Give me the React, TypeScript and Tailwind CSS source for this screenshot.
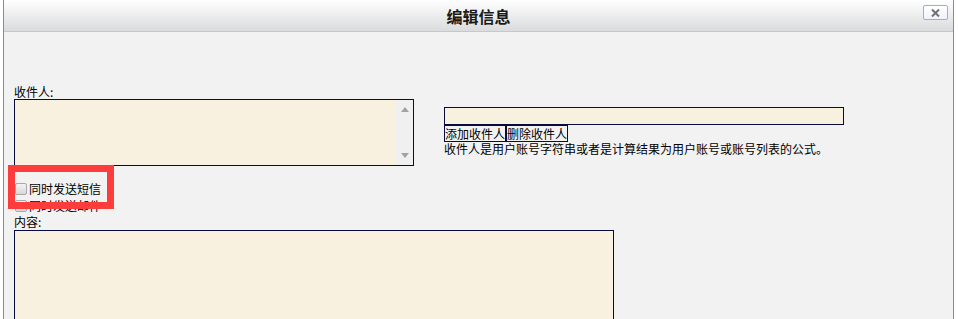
import React from "react";

const font = { fontFamily: '"Noto Sans CJK SC", "Noto Sans", sans-serif' };

function Checkbox({ label }: { label: string }) {
  return (
    <div className="flex items-center h-[17px]">
      <span className="ml-[1px] w-[12px] h-[12px] rounded-[2px] border border-[#a9a9a9] bg-gradient-to-b from-[#f4f4f4] to-[#d8d8d8]" />
      <span className="ml-[2px] text-[12px] leading-[17px] text-black">{label}</span>
    </div>
  );
}

export default function App() {
  return (
    <div className="w-[958px] h-[319px] bg-white relative overflow-hidden" style={font}>
      <div className="ml-[3px] w-[951px] h-[319px] border-l border-r border-[#8c8c8c] bg-[#f2f2f2] relative">
        {/* header */}
        <div className="h-[32px] border-b border-[#c8c8c8] bg-gradient-to-b from-[#ffffff] to-[#dadbdc] flex items-center justify-center relative">
          <span className="text-[16px] font-bold text-[#1a1a1a] leading-[20px]">编辑信息</span>
          <div className="absolute left-[919px] top-[5px] w-[25px] h-[15px] border border-[#8eb0ef] rounded-[2px] bg-gradient-to-b from-[#ffffff] to-[#eef2fb] flex items-center justify-center">
            <svg width="9" height="8" viewBox="0 0 9 8">
              <path d="M1 0.5 L8 7.5 M8 0.5 L1 7.5" stroke="#707070" strokeWidth="2" />
            </svg>
          </div>
        </div>

        {/* body */}
        <div className="pl-[10px] pt-[53px]">
          <div className="flex">
            <div className="w-[400px]">
              <div className="text-[12px] leading-[14px] text-black">收件人:</div>
              <div className="h-[67px] border border-[#0a0a3c] bg-[#f8f1e0] flex">
                <div className="flex-1" />
                <div className="w-[17px] bg-[#f0f0f0] flex flex-col items-center justify-between py-[7px]">
                  <svg width="8" height="5" viewBox="0 0 8 5"><path d="M0 5 L4 0 L8 5 Z" fill="#a3a3a3" /></svg>
                  <svg width="8" height="5" viewBox="0 0 8 5"><path d="M0 0 L4 5 L8 0 Z" fill="#a3a3a3" /></svg>
                </div>
              </div>
            </div>
            <div className="ml-[30px] pt-[22px] w-[400px]">
              <div className="h-[18px] border border-[#0a0a3c] bg-[#f8f1e0]" />
              <div className="flex">
                <div className="h-[17px] border border-[#0a0a3c] bg-[#f2f2f2] text-[12px] leading-[15px] text-black overflow-hidden">添加收件人</div>
                <div className="h-[17px] border border-[#0a0a3c] bg-[#f2f2f2] text-[12px] leading-[15px] text-black overflow-hidden">删除收件人</div>
              </div>
              <div className="text-[12px] leading-[14px] text-black whitespace-nowrap">收件人是用户账号字符串或者是计算结果为用户账号或账号列表的公式。</div>
            </div>
          </div>
          <div className="mt-[14px]">
            <Checkbox label="同时发送短信" />
            <Checkbox label="同时发送邮件" />
          </div>
          <div className="text-[12px] leading-[16px] text-black">内容:</div>
          <div className="w-[600px] h-[120px] border border-[#0a0a3c] bg-[#f8f1e0]" />
        </div>
      </div>

      {/* red annotation */}
      <div className="absolute left-[8px] top-[165px] w-[106px] h-[44px] border-[7px] border-[#fd3c3c]" />
    </div>
  );
}
